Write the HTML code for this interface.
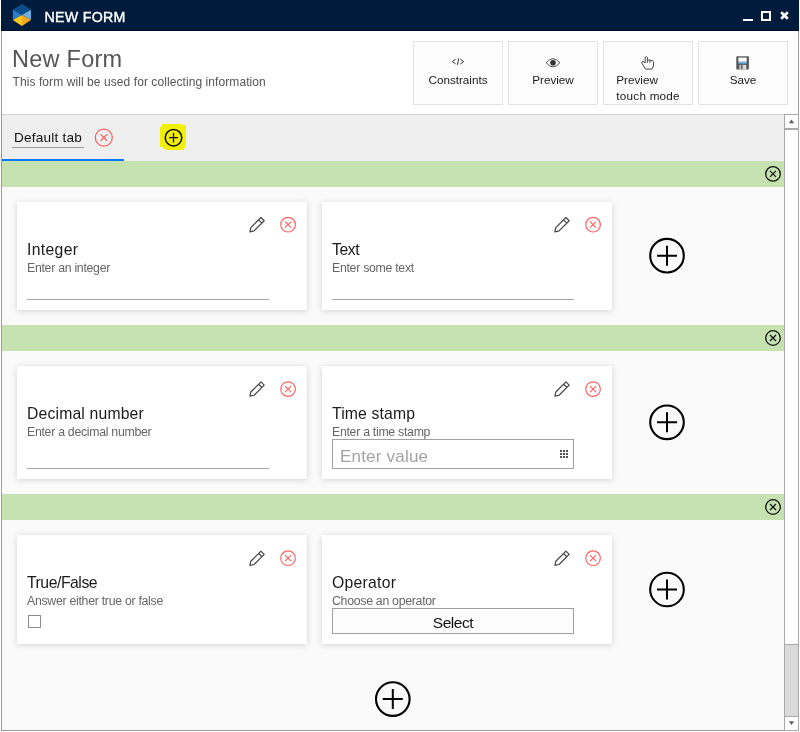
<!DOCTYPE html>
<html><head><meta charset="utf-8">
<style>
*{margin:0;padding:0;box-sizing:border-box}
html,body{width:800px;height:732px;overflow:hidden;background:#fff;font-family:"Liberation Sans",sans-serif}
#wrap{position:absolute;left:0;top:0;width:800px;height:732px;will-change:transform}
.abs{position:absolute}
svg{position:absolute;overflow:visible}
#titlebar{left:1px;top:0;width:798px;height:31px;background:#011b3c;border-bottom:1px solid #000f30}
#ttl{left:44.5px;top:9.5px;color:#fff;font-size:14.2px;line-height:1;white-space:nowrap;letter-spacing:0.3px;-webkit-text-stroke:0.4px #fff}
#frame{left:1px;top:31px;width:798px;height:700px;border-left:1px solid #9b9b9b;border-right:1px solid #9b9b9b;border-bottom:1px solid #9b9b9b;background:#fff}
#header{left:2px;top:31px;width:796px;height:84px;background:#fff;border-bottom:1px solid #d0d0d0}
#h1{left:12px;top:47.5px;font-size:23.5px;line-height:1;color:#555;white-space:nowrap;letter-spacing:0.25px}
#sub{left:12.5px;top:75px;font-size:12px;color:#555;white-space:nowrap;letter-spacing:0.08px}
.btn{top:41px;width:90px;height:64px;background:#fcfcfc;border:1px solid #e3e3e3;font-size:11.7px;line-height:1;color:#1a1a1a}
.btn span{position:absolute;white-space:nowrap;top:31.6px;left:0;width:88px;text-align:center}
.btn span.l{text-align:left;left:12.3px;width:auto}
#tabs{left:2px;top:115px;width:782px;height:46px;background:#efefef}
#content{left:2px;top:161px;width:782px;height:569px;background:#fafafa}
.green{left:2px;width:782px;height:26px;background:#c6e2b1}
.card{width:290px;background:#fff;box-shadow:0 1px 6px rgba(0,0,0,0.16)}
.ct{position:absolute;left:10px;top:39.6px;line-height:1;font-size:15.75px;color:#1a1a1a;white-space:nowrap;letter-spacing:0.3px}
.cd{position:absolute;left:10px;top:60.3px;line-height:1;font-size:12.3px;color:#666;white-space:nowrap;letter-spacing:-0.28px}
.uline{position:absolute;left:10px;width:242px;height:1px;background:#a5a5ad}
.inp{position:absolute;left:10px;top:73px;width:242px;height:30px;border:1px solid #a0a0a0;background:#fff}
.inp span{position:absolute;left:7px;top:7.5px;font-size:17px;line-height:1;color:#a3a3a3;white-space:nowrap;letter-spacing:0.2px}
.chk{position:absolute;left:11px;top:80px;width:13px;height:13px;border:1px solid #8c8c8c;background:#fff}
.sel{position:absolute;left:10px;top:73px;width:242px;height:26px;border:1px solid #a0a0a0;background:#fcfcfc;font-size:15.5px;line-height:1;padding-top:5.6px;text-align:center;color:#111;letter-spacing:-0.45px}
</style></head><body><div id="wrap">
<div id="frame" class="abs"></div>
<div id="titlebar" class="abs"></div>
<svg style="left:0;top:0" width="800" height="31">
  <polygon points="22,15 22,4 31,9.7" fill="#0b4e89"/>
  <polygon points="22,15 22,4 12.8,9.7" fill="#0b4e89"/>
  <polygon points="22,15 12.8,9.7 12.8,20" fill="#2d7ec6"/>
  <polygon points="22,15 31,9.7 31,20" fill="#6caee0"/>
  <polygon points="22,15 12.8,20 22,26" fill="#fdc818"/>
  <polygon points="22,15 31,20 22,26" fill="#f6a91f"/>
  <rect x="743" y="19" width="10" height="2" fill="#fff"/>
  <rect x="762" y="12" width="8" height="8" fill="none" stroke="#fff" stroke-width="2"/>
  <path d="M781.2 12.2 L787.8 18.8 M787.8 12.2 L781.2 18.8" stroke="#fff" stroke-width="2.7"/>
</svg>
<div id="ttl" class="abs">NEW FORM</div>
<div id="header" class="abs"></div>
<div id="h1" class="abs">New Form</div>
<div id="sub" class="abs">This form will be used for collecting information</div>

<div class="btn abs" style="left:413px"><span>Constraints</span></div>
<div class="btn abs" style="left:508px"><span>Preview</span></div>
<div class="btn abs" style="left:603px"><span class="l">Preview</span><span class="l" style="top:47.6px;letter-spacing:0.25px">touch mode</span></div>
<div class="btn abs" style="left:698px"><span>Save</span></div>

<div id="tabs" class="abs"></div>
<div class="abs" style="left:14px;top:130px;font-size:13.6px;color:#111;letter-spacing:0.2px">Default tab</div>
<div class="abs" style="left:12px;top:147px;width:72px;height:1px;background:#a0a0a0"></div>
<div class="abs" style="left:2px;top:159px;width:122px;height:2px;background:#007af8"></div>
<svg style="left:0;top:0" width="800" height="200">
  <circle cx="103.8" cy="137.6" r="8.5" fill="none" stroke="#ff6262" stroke-width="1.3"/>
  <path d="M100.6 134.4 L107 140.8 M107 134.4 L100.6 140.8" stroke="#ff6262" stroke-width="1.3"/>
  <path d="M162,124 H181 V125 H186 V145.5 H185 V148 H183 V150 H166 V149 H163 V147 H160 V127 H162 Z" fill="#f0f000"/>
  <circle cx="173.5" cy="137.7" r="8.25" fill="none" stroke="#111" stroke-width="1.55"/>
  <path d="M169 137.6 H178 M173.5 132.9 V142.5" stroke="#111" stroke-width="1.3"/>
</svg>

<div id="content" class="abs"></div>
<div class="green abs" style="top:161px"></div>
<div class="green abs" style="top:325px"></div>
<div class="green abs" style="top:494px"></div>

<div class="card abs" style="left:17px;top:202px;height:108px"><div class="ct" style="letter-spacing:0.32px">Integer</div><div class="cd">Enter an integer</div><div class="uline" style="top:97px"></div></div>
<div class="card abs" style="left:322px;top:202px;height:108px"><div class="ct" style="letter-spacing:-0.45px">Text</div><div class="cd">Enter some text</div><div class="uline" style="top:97px"></div></div>
<div class="card abs" style="left:17px;top:366px;height:113px"><div class="ct" style="letter-spacing:0.16px">Decimal number</div><div class="cd">Enter a decimal number</div><div class="uline" style="top:102px"></div></div>
<div class="card abs" style="left:322px;top:366px;height:113px"><div class="ct" style="letter-spacing:0.15px">Time stamp</div><div class="cd">Enter a time stamp</div><div class="inp"><span>Enter value</span><svg style="left:227px;top:10px" width="8" height="8"><g fill="#555"><rect x="0" y="0" width="2" height="2"/><rect x="3" y="0" width="2" height="2"/><rect x="6" y="0" width="2" height="2"/><rect x="0" y="3" width="2" height="2"/><rect x="3" y="3" width="2" height="2"/><rect x="6" y="3" width="2" height="2"/><rect x="0" y="6" width="2" height="2"/><rect x="3" y="6" width="2" height="2"/><rect x="6" y="6" width="2" height="2"/></g></svg></div></div>
<div class="card abs" style="left:17px;top:535px;height:109px"><div class="ct" style="letter-spacing:-0.46px">True/False</div><div class="cd">Answer either true or false</div><div class="chk"></div></div>
<div class="card abs" style="left:322px;top:535px;height:109px"><div class="ct" style="letter-spacing:0.26px">Operator</div><div class="cd">Choose an operator</div><div class="sel">Select</div></div>

<svg style="left:0;top:0" width="800" height="732">

<g transform="translate(249.4 232.3)"><g transform="rotate(-45)" fill="none" stroke="#454545" stroke-width="1.2" stroke-linejoin="round"><path d="M0.7,0 L4.3,-2.3 H18.6 V2.3 H4.3 Z M15.3,-2.3 V2.3"/></g></g><g transform="translate(288.05 224.7)" fill="none" stroke="#ff6464" stroke-width="1.2"><circle cx="0" cy="0" r="7.3"/><path d="M-3 -3 L3 3 M3 -3 L-3 3"/></g>
<g transform="translate(554.4 232.3)"><g transform="rotate(-45)" fill="none" stroke="#454545" stroke-width="1.2" stroke-linejoin="round"><path d="M0.7,0 L4.3,-2.3 H18.6 V2.3 H4.3 Z M15.3,-2.3 V2.3"/></g></g><g transform="translate(593.05 224.7)" fill="none" stroke="#ff6464" stroke-width="1.2"><circle cx="0" cy="0" r="7.3"/><path d="M-3 -3 L3 3 M3 -3 L-3 3"/></g>
<g transform="translate(249.4 396.7)"><g transform="rotate(-45)" fill="none" stroke="#454545" stroke-width="1.2" stroke-linejoin="round"><path d="M0.7,0 L4.3,-2.3 H18.6 V2.3 H4.3 Z M15.3,-2.3 V2.3"/></g></g><g transform="translate(288.05 389.1)" fill="none" stroke="#ff6464" stroke-width="1.2"><circle cx="0" cy="0" r="7.3"/><path d="M-3 -3 L3 3 M3 -3 L-3 3"/></g>
<g transform="translate(554.4 396.7)"><g transform="rotate(-45)" fill="none" stroke="#454545" stroke-width="1.2" stroke-linejoin="round"><path d="M0.7,0 L4.3,-2.3 H18.6 V2.3 H4.3 Z M15.3,-2.3 V2.3"/></g></g><g transform="translate(593.05 389.1)" fill="none" stroke="#ff6464" stroke-width="1.2"><circle cx="0" cy="0" r="7.3"/><path d="M-3 -3 L3 3 M3 -3 L-3 3"/></g>
<g transform="translate(249.4 565.9)"><g transform="rotate(-45)" fill="none" stroke="#454545" stroke-width="1.2" stroke-linejoin="round"><path d="M0.7,0 L4.3,-2.3 H18.6 V2.3 H4.3 Z M15.3,-2.3 V2.3"/></g></g><g transform="translate(288.05 558.2)" fill="none" stroke="#ff6464" stroke-width="1.2"><circle cx="0" cy="0" r="7.3"/><path d="M-3 -3 L3 3 M3 -3 L-3 3"/></g>
<g transform="translate(554.4 565.9)"><g transform="rotate(-45)" fill="none" stroke="#454545" stroke-width="1.2" stroke-linejoin="round"><path d="M0.7,0 L4.3,-2.3 H18.6 V2.3 H4.3 Z M15.3,-2.3 V2.3"/></g></g><g transform="translate(593.05 558.2)" fill="none" stroke="#ff6464" stroke-width="1.2"><circle cx="0" cy="0" r="7.3"/><path d="M-3 -3 L3 3 M3 -3 L-3 3"/></g>
<g transform="translate(667 255.7)" fill="none" stroke="#000"><circle cx="0" cy="0" r="16.8" stroke-width="2.1"/><path d="M-10 0 H10 M0 -10 V10" stroke-width="2"/></g><g transform="translate(667 422.3)" fill="none" stroke="#000"><circle cx="0" cy="0" r="16.8" stroke-width="2.1"/><path d="M-10 0 H10 M0 -10 V10" stroke-width="2"/></g><g transform="translate(667 589.5)" fill="none" stroke="#000"><circle cx="0" cy="0" r="16.8" stroke-width="2.1"/><path d="M-10 0 H10 M0 -10 V10" stroke-width="2"/></g><g transform="translate(392.8 699.1)" fill="none" stroke="#000"><circle cx="0" cy="0" r="16.8" stroke-width="2.1"/><path d="M-10 0 H10 M0 -10 V10" stroke-width="2"/></g>
<g transform="translate(773 173.9)" fill="none" stroke="#111" stroke-width="1.3"><circle cx="0" cy="0" r="7.3"/><path d="M-3 -3 L3 3 M3 -3 L-3 3"/></g><g transform="translate(773 338)" fill="none" stroke="#111" stroke-width="1.3"><circle cx="0" cy="0" r="7.3"/><path d="M-3 -3 L3 3 M3 -3 L-3 3"/></g><g transform="translate(773 507)" fill="none" stroke="#111" stroke-width="1.3"><circle cx="0" cy="0" r="7.3"/><path d="M-3 -3 L3 3 M3 -3 L-3 3"/></g>
<!-- scrollbar -->
<rect x="784" y="114" width="15" height="617" fill="#fff"/>
<rect x="785" y="645" width="13" height="71" fill="#dadada"/>
<path d="M784.5 114 V730.5 M798.5 114 V731 M784 730.5 H799 M784 114.5 H799 M784 128.5 H799 M784 129.5 H799 M784 644.5 H799 M784 716.5 H799" stroke="#a9a9a9" stroke-width="1" fill="none"/>
<path d="M788.8 123.2 L791.5 119.4 L794.2 123.2 Z" fill="#606060"/>
<path d="M788.8 721.3 L791.5 725.1 L794.2 721.3 Z" fill="#606060"/>
<!-- button icons -->
<g fill="none" stroke="#333" stroke-width="1"><path d="M455.6 59.3 L452.3 61.6 L455.6 63.9 M458.6 58.4 L457.5 64.9 M460.4 59.3 L463.7 61.6 L460.4 63.9"/></g>
<path d="M546.2 62.8 Q553 54.6 559.8 62.8 Q553 71 546.2 62.8 Z" fill="none" stroke="#333" stroke-width="0.85"/>
<circle cx="553" cy="62.8" r="2.8" fill="#333"/>
<path d="M645.6 69.1 L641.9 63.3 Q641.3 61.7 642.9 61.3 L645.2 62.9 V57.4 Q646.3 55.8 647.4 57.4 V60.4 Q649.6 59.5 650.9 60.3 Q653.1 60.3 653.5 62.2 V66 L651.8 69.1 Z M647.4 60.4 V62.8 M649.9 60.1 V62.8" fill="none" stroke="#3d3d3d" stroke-width="0.95" stroke-linejoin="round"/>
<defs><linearGradient id="bl" x1="0" y1="0" x2="0" y2="1"><stop offset="0" stop-color="#a8d4ee"/><stop offset="1" stop-color="#2a7ab0"/></linearGradient><linearGradient id="gy" x1="0" y1="0" x2="1" y2="0"><stop offset="0" stop-color="#b8b8b8"/><stop offset="1" stop-color="#e6e6e6"/></linearGradient></defs>
<rect x="736.3" y="56.2" width="12.6" height="13.3" rx="0.9" fill="#555"/>
<rect x="738.4" y="56.2" width="8.3" height="1.6" fill="#8c8c8c"/>
<rect x="738.4" y="57.8" width="8.3" height="3.9" fill="#fff"/>
<rect x="738.4" y="61.7" width="8.3" height="2.5" fill="url(#bl)"/>
<rect x="739.2" y="64.9" width="7" height="4.6" fill="url(#gy)"/>
<rect x="741.3" y="65.2" width="1.1" height="3.6" fill="#333"/>
</svg>
</div></body></html>
